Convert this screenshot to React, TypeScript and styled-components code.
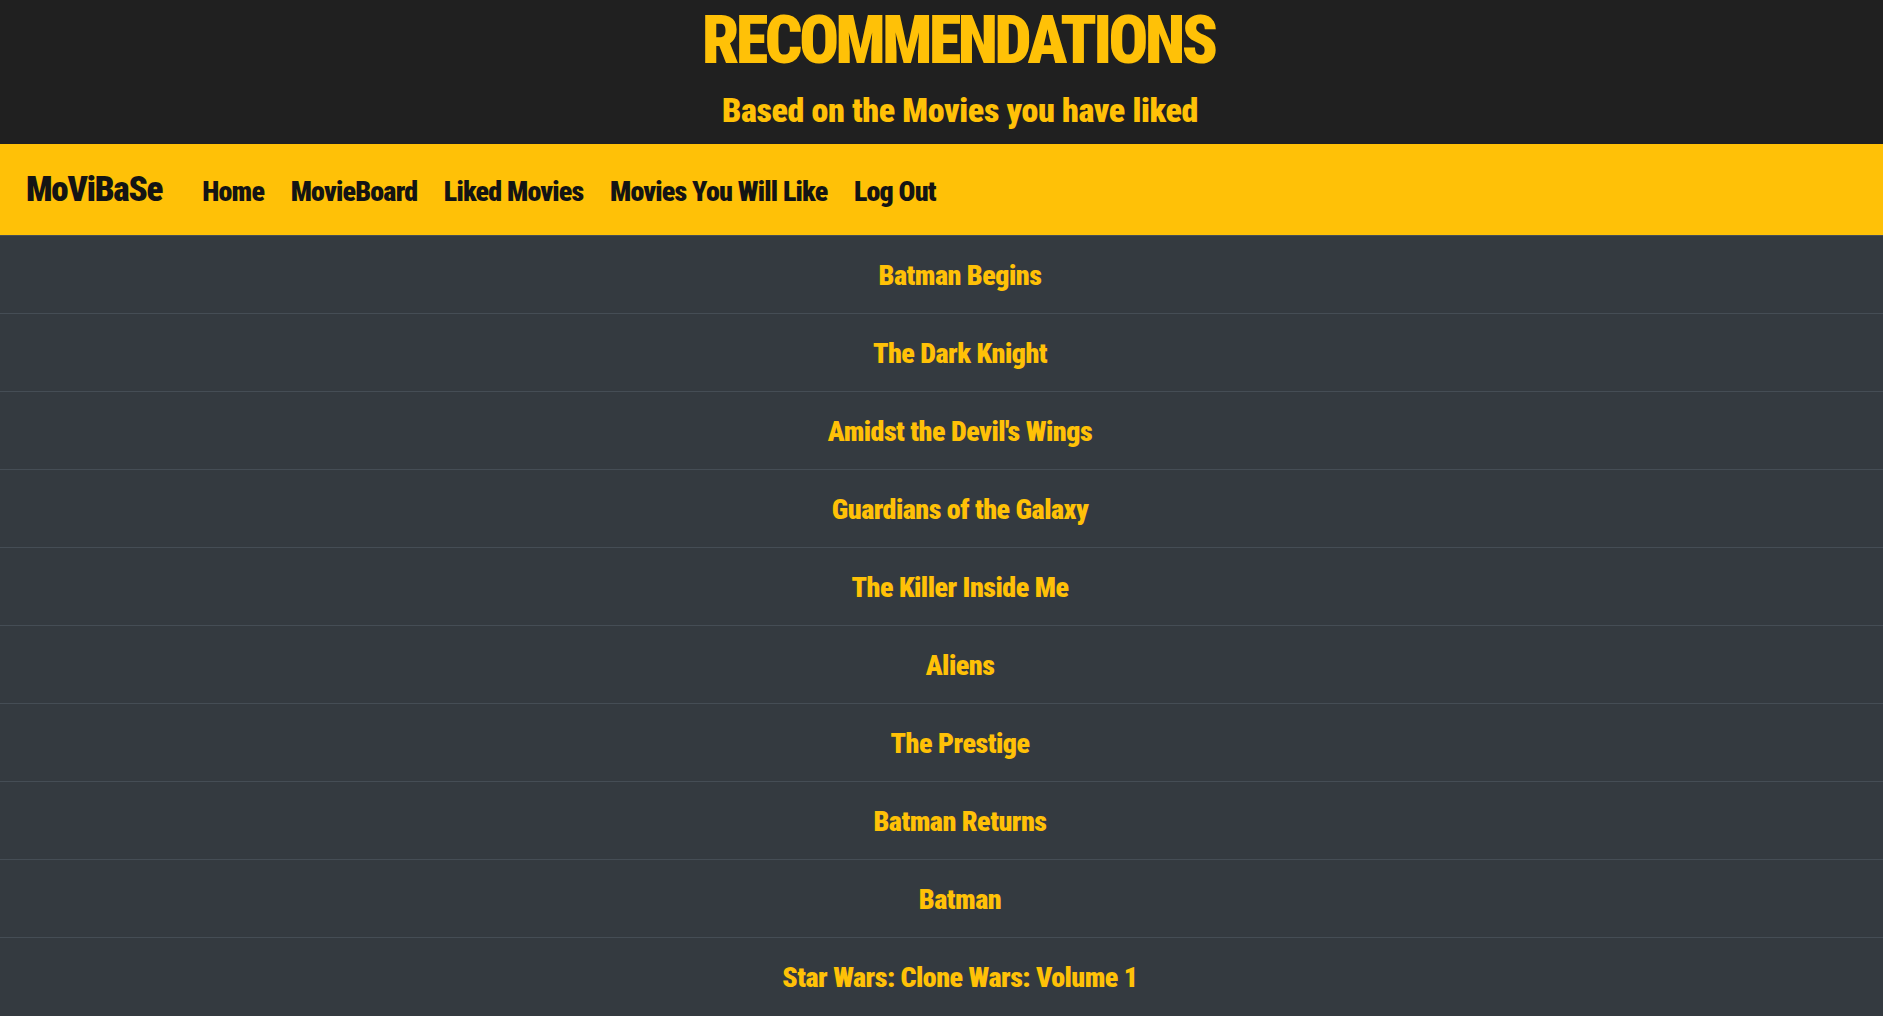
import React from "react";
import styled, { createGlobalStyle } from "styled-components";

const GlobalStyle = createGlobalStyle`
  html, body {
    margin: 0;
    padding: 0;
    overflow-x: hidden;
    background: #343a40;
  }
  * { box-sizing: border-box; }
`;

const FONT = `Roboto, "Roboto Condensed", "Open Sans", sans-serif`;

const Page = styled.div`
  width: 1920px;
  font-family: ${FONT};
  font-stretch: 75%;
  font-weight: 900;
`;

const Header = styled.header`
  height: 144px;
  background: #202020;
  display: flex;
  flex-direction: column;
  align-items: center;
  padding-top: 8px;
`;

const Title = styled.h1`
  margin: 0;
  font-size: 66px;
  line-height: 66px;
  letter-spacing: -3.4px;
  font-weight: 900;
  color: #ffc107;
  text-indent: -3.4px;
`;

const Subtitle = styled.h4`
  margin: 19px 0 0;
  font-size: 34px;
  line-height: 34px;
  letter-spacing: -0.35px;
  font-weight: 900;
  color: #ffc107;
`;

const NavBar = styled.nav`
  height: 91px;
  background: #ffc107;
  display: flex;
  align-items: center;
  padding-left: 26px;
`;

const Brand = styled.a`
  font-size: 35px;
  line-height: 35px;
  letter-spacing: -1.2px;
  color: #141414;
  text-decoration: none;
  margin-right: 40px;
`;

const NavLinks = styled.ul`
  list-style: none;
  margin: 0;
  padding: 0;
  display: flex;
  gap: 26.5px;
`;

const NavLink = styled.a`
  display: block;
  padding-top: 4px;
  font-size: 28px;
  line-height: 28px;
  letter-spacing: -0.8px;
  color: #141414;
  text-decoration: none;
`;

const List = styled.ul`
  list-style: none;
  margin: 0;
  padding: 0;
  background: #343a40;
`;

const Row = styled.li`
  height: 78px;
  border-top: 1px solid #454d55;
  padding: 26px 0 23px;
  text-align: center;
  font-size: 28px;
  line-height: 28px;
  letter-spacing: -0.5px;
  color: #ffc107;
`;

const links = ["Home", "MovieBoard", "Liked Movies", "Movies You Will Like", "Log Out"];

const movies = [
  "Batman Begins",
  "The Dark Knight",
  "Amidst the Devil's Wings",
  "Guardians of the Galaxy",
  "The Killer Inside Me",
  "Aliens",
  "The Prestige",
  "Batman Returns",
  "Batman",
  "Star Wars: Clone Wars: Volume 1",
];

export default function App() {
  return (
    <>
      <GlobalStyle />
      <Page>
        <Header>
          <Title>RECOMMENDATIONS</Title>
          <Subtitle>Based on the Movies you have liked</Subtitle>
        </Header>
        <NavBar>
          <Brand href="#">MoViBaSe</Brand>
          <NavLinks>
            {links.map((l) => (
              <li key={l}>
                <NavLink href="#">{l}</NavLink>
              </li>
            ))}
          </NavLinks>
        </NavBar>
        <List>
          {movies.map((m) => (
            <Row key={m}>{m}</Row>
          ))}
        </List>
      </Page>
    </>
  );
}
